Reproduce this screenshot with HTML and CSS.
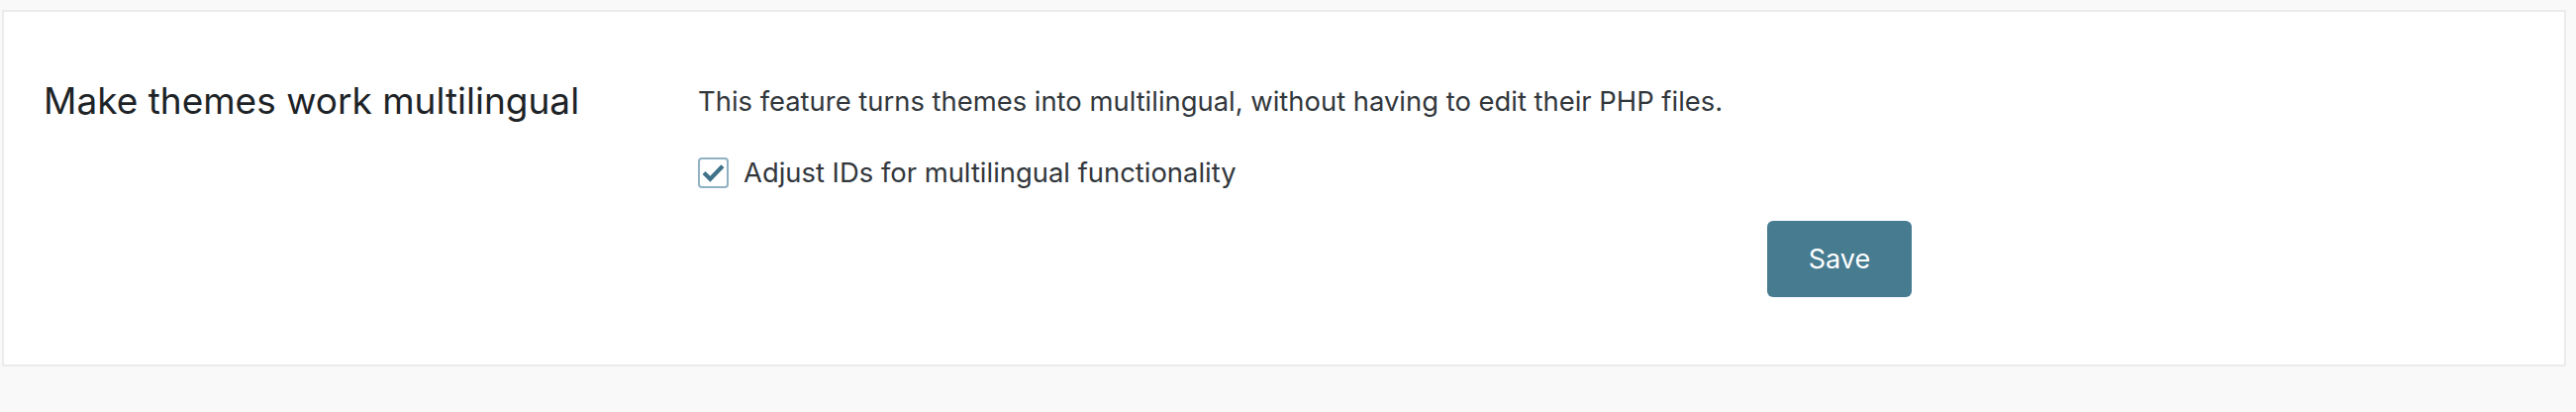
FILE: index.html
```html
<!DOCTYPE html>
<html lang="en">
<head>
<meta charset="utf-8">
<title>Make themes work multilingual</title>
<link rel="stylesheet" href="styles.css">
</head>
<body>
<div class="page">
  <section class="card">
    <div class="card-left">
      <h2 class="card-title">Make themes work multilingual</h2>
    </div>
    <div class="card-right">
      <p class="desc">This feature turns themes into multilingual, without having to edit their PHP files.</p>
      <label class="check-row">
        <span class="checkbox">
          <svg viewBox="0 0 30 30" width="30" height="30" aria-hidden="true">
            <path d="M4.5 15 L11.5 22 L25.5 7.5" fill="none" stroke="#3f7188" stroke-width="4.6" stroke-linecap="butt" stroke-linejoin="miter"/>
          </svg>
        </span>
        <span class="check-label">Adjust IDs for multilingual functionality</span>
      </label>
      <div class="actions">
        <button class="btn-save" type="button">Save</button>
      </div>
    </div>
  </section>
</div>
</body>
</html>
```
FILE: styles.css
```css
* { box-sizing: border-box; }
html, body {
  margin: 0;
  padding: 0;
  background: #f9f9f9;
}
body {
  font-family: Inter, "Noto Sans", "Liberation Sans", sans-serif;
  color: #1d2327;
}
.page {
  padding: 10px 10px 46px 2px;
}
.card {
  display: flex;
  background: #ffffff;
  border: 2px solid #ebebeb;
  height: 360px;
  padding: 0 0 0 40px;
}
.card-left {
  flex: 0 0 661px;
}
.card-title {
  margin: 0;
  padding-top: 66px;
  font-size: 37px;
  line-height: 47px;
  font-weight: 400;
  color: #1d2327;
}
.card-right {
  flex: 0 0 1226px;
  display: flex;
  flex-direction: column;
  padding-top: 72px;
}
.desc {
  margin: 0;
  font-size: 27.4px;
  line-height: 36px;
  color: #32373c;
}
.check-row {
  display: flex;
  align-items: center;
  gap: 15px;
  margin-top: 36px;
}
.checkbox {
  width: 31px;
  height: 31px;
  border: 2px solid #90b1c2;
  border-radius: 4px;
  display: flex;
  align-items: center;
  justify-content: center;
  background: #fff;
}
.checkbox svg { display: block; width: 27px; height: 27px; }
.check-label {
  font-size: 27.4px;
  line-height: 36px;
  color: #32373c;
}
.actions {
  display: flex;
  justify-content: flex-end;
  margin-top: 31px;
}
.btn-save {
  width: 146px;
  height: 77px;
  border: 0;
  border-radius: 6px;
  background: #467b90;
  color: #ffffff;
  font-family: Inter, "Noto Sans", "Liberation Sans", sans-serif;
  font-size: 27px;
  font-weight: 400;
  cursor: pointer;
}
```
